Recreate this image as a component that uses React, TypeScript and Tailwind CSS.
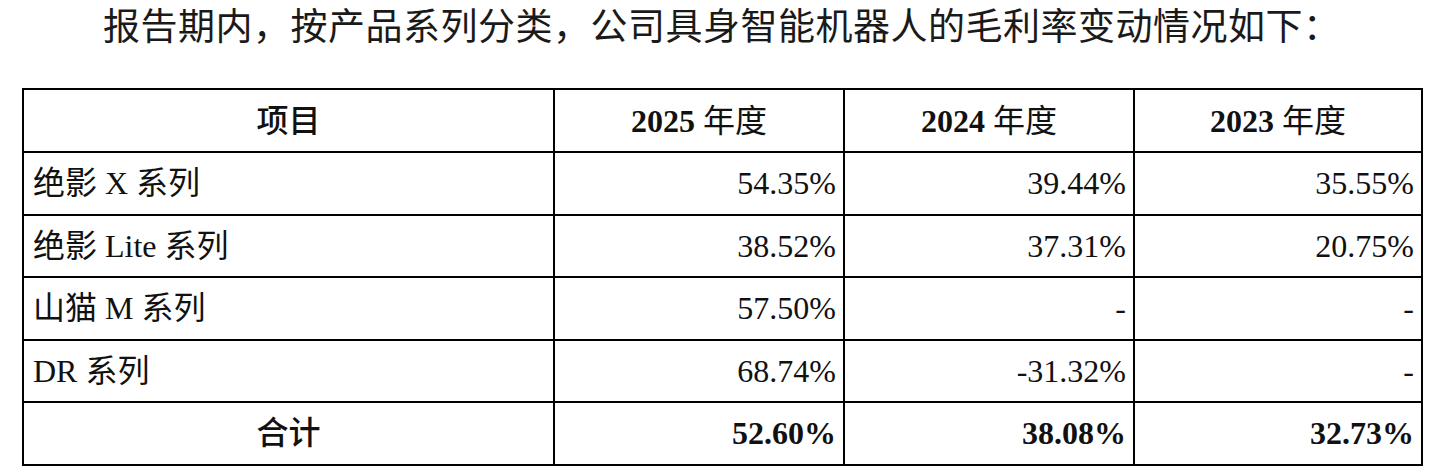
import React from "react";

const rows: { name: string; a: string; b: string; c: string }[] = [
  { name: "绝影 X 系列", a: "54.35%", b: "39.44%", c: "35.55%" },
  { name: "绝影 Lite 系列", a: "38.52%", b: "37.31%", c: "20.75%" },
  { name: "山猫 M 系列", a: "57.50%", b: "-", c: "-" },
  { name: "DR 系列", a: "68.74%", b: "-31.32%", c: "-" },
];

const font = { fontFamily: '"Liberation Serif", "Noto Sans CJK SC", serif' };

function Year({ y }: { y: string }) {
  return (
    <>
      <span className="font-bold">{y}</span> <span className="font-normal">年度</span>
    </>
  );
}

export default function App() {
  return (
    <div className="w-[1440px] h-[476px] bg-white text-[#111]" style={font}>
      <p className="pl-[103px] pt-[6px] text-[37px] leading-[44px] tracking-[0.5px] text-[#1a1a1a] whitespace-nowrap">
        报告期内，按产品系列分类，公司具身智能机器人的毛利率变动情况如下：
      </p>
      <table className="mt-[38px] ml-[22px] w-[1399px] table-fixed border-collapse border-2 border-black text-[32px] leading-none">
        <colgroup>
          <col className="w-[531px]" />
          <col className="w-[290px]" />
          <col className="w-[290px]" />
          <col className="w-[288px]" />
        </colgroup>
        <thead>
          <tr className="h-[63px]">
            <th className="border-2 border-black font-medium text-center">项目</th>
            <th className="border-2 border-black text-center">
              <Year y="2025" />
            </th>
            <th className="border-2 border-black text-center">
              <Year y="2024" />
            </th>
            <th className="border-2 border-black text-center">
              <Year y="2023" />
            </th>
          </tr>
        </thead>
        <tbody>
          {rows.map((r) => (
            <tr key={r.name} className="h-[62.5px]">
              <td className="border-2 border-black pl-[9px] text-left whitespace-nowrap">{r.name}</td>
              <td className="border-2 border-black pr-[7px] text-right">{r.a}</td>
              <td className="border-2 border-black pr-[7px] text-right">{r.b}</td>
              <td className="border-2 border-black pr-[7px] text-right">{r.c}</td>
            </tr>
          ))}
          <tr className="h-[62.5px]">
            <td className="border-2 border-black text-center font-medium">合计</td>
            <td className="border-2 border-black pr-[7px] text-right font-bold">52.60%</td>
            <td className="border-2 border-black pr-[7px] text-right font-bold">38.08%</td>
            <td className="border-2 border-black pr-[7px] text-right font-bold">32.73%</td>
          </tr>
        </tbody>
      </table>
    </div>
  );
}
